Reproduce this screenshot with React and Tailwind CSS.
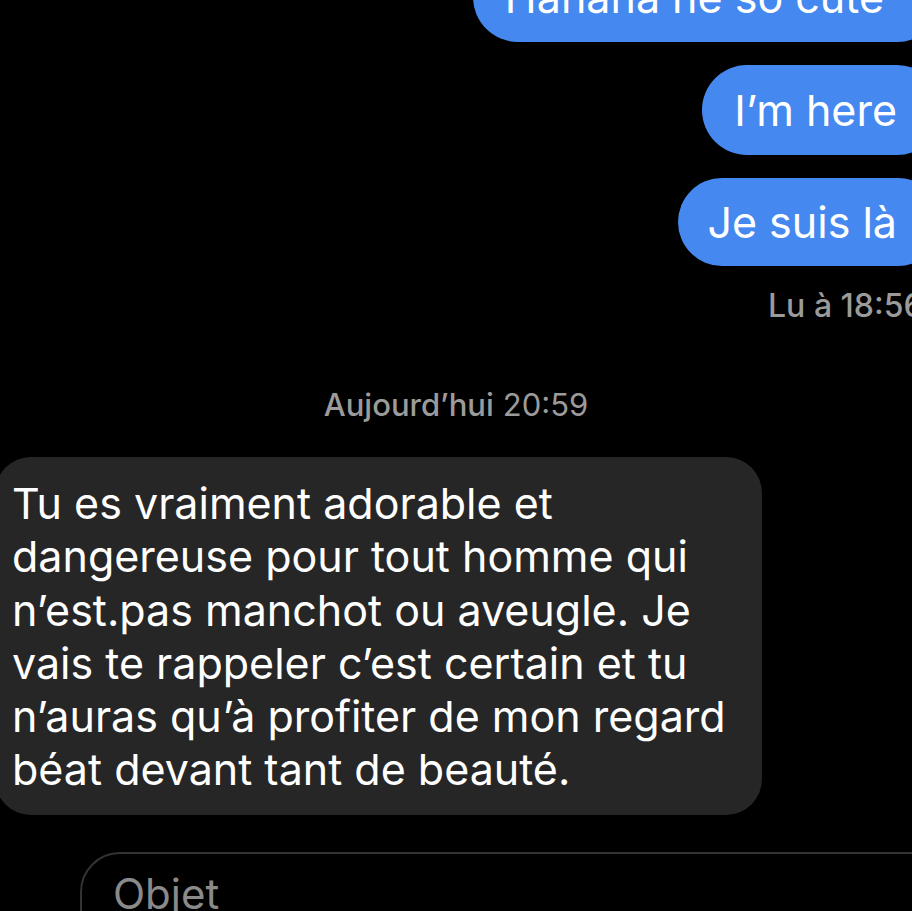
export default function App() {
  const font = { fontFamily: 'Inter, "Noto Sans", sans-serif' };
  return (
    <div className="w-[912px] h-[911px] bg-black overflow-hidden flex flex-col text-white" style={font}>
      <div className="flex justify-end mt-[-48px]">
        <div className="h-[90px] rounded-[45px] bg-[#4589f0] mr-[-30px] pl-[32px] pr-[58px] flex items-center text-[43px] leading-[48px] whitespace-nowrap">
          Hahaha he so cute
        </div>
      </div>
      <div className="flex justify-end mt-[23px]">
        <div className="h-[90px] rounded-[45px] bg-[#4589f0] mr-[-30px] pl-[32px] pr-[45px] flex items-center text-[43px] leading-[48px] whitespace-nowrap">
          I’m here
        </div>
      </div>
      <div className="flex justify-end mt-[23px]">
        <div className="h-[88px] rounded-[44px] bg-[#4589f0] mr-[-30px] pl-[29px] pr-[45px] flex items-center text-[43px] leading-[48px] whitespace-nowrap">
          Je suis là
        </div>
      </div>
      <div className="flex justify-end mt-[21px]">
        <div className="w-[144px] text-[32px] leading-[38px] font-medium text-[#9b9b9b] whitespace-nowrap">
          Lu à 18:56
        </div>
      </div>
      <div className="flex justify-center mt-[62px] text-[31px] leading-[36px] text-[#9b9b9b] whitespace-nowrap">
        <span className="font-medium">Aujourd’hui</span>
        <span className="ml-[9px]">20:59</span>
      </div>
      <div className="mt-[34px] ml-[-5px] w-[767px] rounded-[36px] bg-[#262626] pl-[17px] pt-[20px] pb-[18px] text-[43px] leading-[53.3px] whitespace-nowrap">
        Tu es vraiment adorable et<br />
        dangereuse pour tout homme qui<br />
        n’est.pas manchot ou aveugle. Je<br />
        vais te rappeler c’est certain et tu<br />
        n’auras qu’à profiter de mon regard<br />
        béat devant tant de beauté.
      </div>
      <div className="mt-[37px] ml-[80px] mr-[-40px] h-[120px] shrink-0 rounded-[40px] border-2 border-[#333333] pl-[31px] pt-[16px] text-[42px] leading-[48px] text-[#8a8a8a]">
        Objet
      </div>
    </div>
  );
}
